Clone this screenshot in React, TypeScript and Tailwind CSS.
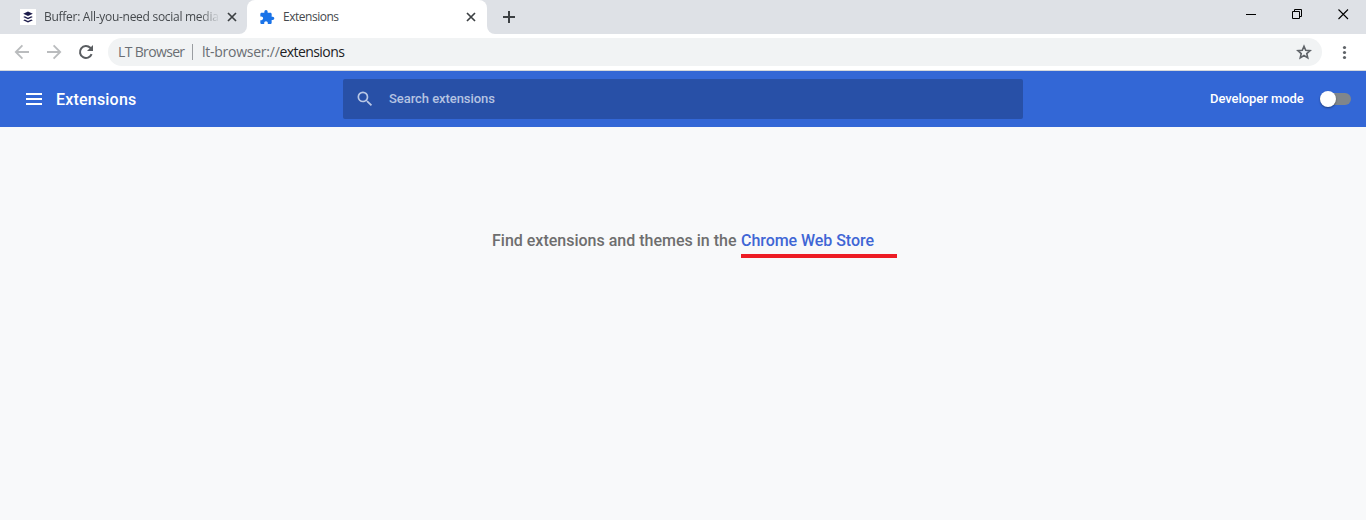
import React from "react";

const ui = "font-['Open_Sans','Noto_Sans',sans-serif]";

function Cross() {
  return (
    <svg className="h-2.5 w-2.5 shrink-0" viewBox="0 0 10 10" fill="none" stroke="#3c4043" strokeWidth="1.7">
      <path d="M1 1l8 8M9 1l-8 8" />
    </svg>
  );
}

function TabStrip() {
  return (
    <div className="flex h-[34px] bg-white">
      <div className="flex w-[247px] items-center rounded-br-lg bg-[#dee1e6] pl-5">
        <div className="flex h-4 w-4 shrink-0 items-center justify-center bg-white">
          <svg className="h-3 w-3" viewBox="0 0 12 12" fill="#1c1b4b">
            <path d="M6 0.5L10.8 2.7 6 4.9 1.2 2.7z" />
            <path d="M1.2 6l1.6-.8L6 6.7l3.2-1.5 1.6.8L6 8.2z" />
            <path d="M1.2 9.2l1.6-.8L6 9.9l3.2-1.5 1.6.8L6 11.4z" />
          </svg>
        </div>
        <div className={`${ui} ml-2 w-[175px] whitespace-nowrap text-[12px] leading-4 tracking-[-0.28px] text-[#45494d] [mask-image:linear-gradient(to_right,black_156px,transparent_176px)]`}>
          Buffer: All-you-need social media
        </div>
        <div className="ml-2"><Cross /></div>
      </div>
      <div className="w-60 bg-[#dee1e6]">
        <div className="flex h-full items-center rounded-t-lg bg-white pl-3">
          <svg className="h-4 w-4 shrink-0" viewBox="0 0 24 24" fill="#1a73e8">
            <path transform="translate(0 .5)" d="M20.5 11H19V7c0-1.1-.9-2-2-2h-4V3.5a2.5 2.5 0 0 0-5 0V5H4c-1.1 0-1.99.9-1.99 2v3.8H3.5c1.49 0 2.7 1.21 2.7 2.7s-1.21 2.7-2.7 2.7H2V20c0 1.1.9 2 2 2h3.8v-1.5c0-1.49 1.21-2.7 2.7-2.7s2.7 1.21 2.7 2.7V22H17c1.1 0 2-.9 2-2v-4h1.5a2.5 2.5 0 0 0 0-5z" />
          </svg>
          <span className={`${ui} ml-2 w-[175px] text-[12px] leading-4 tracking-[-0.48px] text-[#45494d]`}>Extensions</span>
          <div className="ml-2"><Cross /></div>
        </div>
      </div>
      <div className="flex flex-1 items-center rounded-bl-lg bg-[#dee1e6] pl-4">
        <svg className="h-3 w-3" viewBox="0 0 12 12" stroke="#3c4043" strokeWidth="2">
          <path d="M6 0v12M0 6h12" />
        </svg>
        <div className="mb-[5px] ml-auto flex items-center pr-[17px]">
          <svg className="h-[11px] w-[11px]" viewBox="0 0 11 11" shapeRendering="crispEdges">
            <path d="M0 5.5h10" stroke="#000" />
          </svg>
          <svg className="ml-[35px] h-[11px] w-[11px]" viewBox="0 0 11 11" fill="none" stroke="#000">
            <path d="M.5 2.5h7v7h-7zM2.5 2.5v-2h7v7h-2" />
          </svg>
          <svg className="ml-[35px] h-[11px] w-[11px]" viewBox="0 0 11 11" stroke="#000" strokeWidth="1.1">
            <path d="M.5.5l9.5 9.5M10 .5L.5 10" />
          </svg>
        </div>
      </div>
    </div>
  );
}

function Toolbar() {
  return (
    <div className="flex h-[37px] items-center border-b border-[#d5d8dc] bg-white pl-[14px]">
      <svg className="h-4 w-4" viewBox="0 0 16 16" fill="none" stroke="#babcbe" strokeWidth="1.8">
        <path d="M15 8H2M8.4 1.4L1.8 8l6.6 6.6" />
      </svg>
      <svg className="ml-4 h-4 w-4" viewBox="0 0 16 16" fill="none" stroke="#babcbe" strokeWidth="1.8">
        <path d="M1 8h13M7.6 1.4L14.2 8l-6.6 6.6" />
      </svg>
      <svg className="ml-4 h-4 w-4" viewBox="0 0 16 16" fill="none" stroke="#5a5d61" strokeWidth="2">
        <path d="M13.6 10.1A6 6 0 1 1 12.3 3.8L14 5.5" />
        <path d="M15 1v6H9z" fill="#5a5d61" stroke="none" />
      </svg>
      <div className={`${ui} ml-[14px] flex h-7 w-[1214px] items-center rounded-full bg-[#f1f3f4] pl-2.5 text-[14px] leading-5 text-[#6a6e73]`}>
        <span className="w-[74px] whitespace-nowrap tracking-[-0.65px]">LT Browser</span>
        <span className="h-4 w-px bg-[#9a9da1]" />
        <span className="ml-[9px] whitespace-nowrap tracking-[-0.25px]">
          lt-browser://<span className="tracking-[-0.58px] text-[#202124]">extensions</span>
        </span>
        <svg className="ml-auto mr-2.5 h-4 w-4" viewBox="0 0 16 16" fill="none" stroke="#5f6368" strokeWidth="1.6">
          <path d="M8 2.2l1.7 4.05 4.4.38-3.35 2.9 1 4.3L8 11.55l-3.75 2.28 1-4.3-3.35-2.9 4.4-.38z" />
        </svg>
      </div>
      <svg className="ml-[14px] h-4 w-4" viewBox="0 0 16 16" fill="#5f6368">
        <circle cx="8.5" cy="3.5" r="1.6" />
        <circle cx="8.5" cy="8.5" r="1.6" />
        <circle cx="8.5" cy="13.5" r="1.6" />
      </svg>
    </div>
  );
}

function Header() {
  return (
    <header className="flex h-14 items-center bg-[#3367d6] pl-[26px] font-medium">
      <svg className="h-3 w-4" viewBox="0 0 16 12" fill="#fff">
        <path d="M0 0h16v2H0zM0 5h16v2H0zM0 10h16v2H0z" />
      </svg>
      <h1 className="ml-3.5 w-[287px] pt-0.5 text-[16px] leading-6 tracking-[0.2px] text-white">Extensions</h1>
      <div className="flex h-10 w-[680px] items-center rounded-[2px] bg-[#2850a7] pl-3">
        <svg className="h-5 w-5" viewBox="0 0 24 24" fill="#b9c7e5">
          <path d="M15.5 14h-.79l-.28-.27A6.47 6.47 0 0 0 16 9.5 6.5 6.5 0 1 0 9.5 16c1.61 0 3.09-.59 4.23-1.57l.27.28v.79l5 4.99L20.49 19l-4.99-5zm-6 0C7.01 14 5 11.99 5 9.5S7.01 5 9.5 5 14 7.01 14 9.5 11.99 14 9.5 14z" />
        </svg>
        <span className="ml-3.5 text-[13px] leading-5 tracking-[-0.06px] text-[#b5c3e2]">Search extensions</span>
      </div>
      <span className="ml-[187px] w-[94px] whitespace-nowrap text-[13px] leading-5 tracking-[-0.05px] text-white">Developer mode</span>
      <button className="ml-4 flex h-4 w-8 items-center" aria-label="Developer mode">
        <span className="flex h-3 w-[31px] items-center rounded-full bg-[#80868b]">
          <span className="h-4 w-4 rounded-full bg-white shadow-[0_1px_2px_rgba(0,0,0,0.4)]" />
        </span>
      </button>
    </header>
  );
}

export default function App() {
  return (
    <div className="flex h-[520px] w-[1366px] flex-col overflow-hidden bg-[#f8f9fa] font-[Roboto,sans-serif]">
      <TabStrip />
      <Toolbar />
      <Header />
      <main className="flex flex-1 items-start pl-[492px] pt-[102px] text-[16px] font-medium leading-6 text-[#6e6e6e]">
        <span className="w-[249px] whitespace-nowrap">Find extensions and themes in the</span>
        <a className="block w-[156px] whitespace-nowrap border-b-4 border-[#ed1c24] pb-[1px] tracking-[-0.05px] text-[#3f66d5]">Chrome Web Store</a>
      </main>
    </div>
  );
}
